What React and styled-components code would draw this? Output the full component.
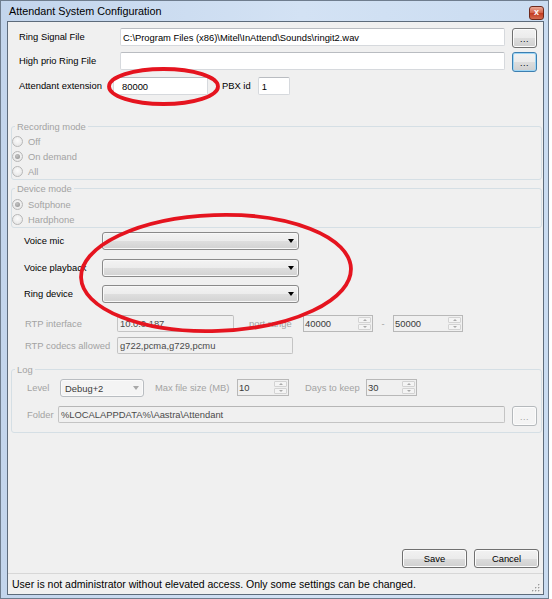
import React from 'react';
import styled, { createGlobalStyle } from 'styled-components';

const GlobalStyle = createGlobalStyle`
  html, body {
    margin: 0;
    padding: 0;
    background: #ffffff;
  }
  body {
    font-family: "Liberation Sans", Arial, sans-serif;
    font-size: 9.4px;
    color: #000;
  }
`;

const Desktop = styled.div`
  position: relative;
  width: 552px;
  height: 599px;
  display: flex;
  overflow: hidden;
`;

const Window = styled.div`
  box-sizing: border-box;
  width: 549px;
  height: 599px;
  border: 1px solid #6f7d8e;
  background: linear-gradient(to right, #c3d5ec, #d3e2f4 55%, #cadcf1);
  padding: 0 4px 3px 6px;
  display: flex;
  flex-direction: column;
`;

const TitleBar = styled.div`
  height: 20px;
  display: flex;
  align-items: center;
  justify-content: space-between;
  padding: 0 0 0 2px;
  font-size: 10.8px;
`;

const CloseButton = styled.div`
  box-sizing: border-box;
  width: 15px;
  height: 14px;
  margin-top: 3px;
  border: 1px solid #6e2a1d;
  border-radius: 3px;
  background: linear-gradient(#eaa895, #d5634b 48%, #c23a20 52%, #d46a4f);
  color: #fff;
  font: bold 9px "Liberation Sans", Arial, sans-serif;
  display: flex;
  align-items: center;
  justify-content: center;
  line-height: 1;
`;

const Client = styled.div`
  flex: 1;
  min-height: 0;
  border: 1px solid #5d6b7b;
  background: #f0f0f0;
  display: flex;
  flex-direction: column;
`;

const TopSection = styled.div`
  padding: 6px 0 0 11px;
  display: flex;
  flex-direction: column;
`;

const FileRow = styled.div`
  display: flex;
  align-items: flex-start;
  margin-top: ${p => p.$mt || 0}px;
`;

const Label = styled.span`
  flex: none;
  width: ${p => (p.$w ? `${p.$w}px` : 'auto')};
  margin-left: ${p => p.$ml || 0}px;
  height: ${p => p.$h || 18}px;
  line-height: ${p => p.$h || 18}px;
  color: ${p => (p.$off ? '#a3a3a3' : '#000')};
  text-align: ${p => p.$align || 'left'};
  white-space: nowrap;
`;

const TextBox = styled.div`
  box-sizing: border-box;
  flex: none;
  width: ${p => p.$w}px;
  height: ${p => p.$h || 18}px;
  margin-left: ${p => p.$ml || 0}px;
  border: 1px solid ${p => (p.$off ? '#c4c4c4' : '#d6d9dd')};
  border-top-color: ${p => (p.$off ? '#b6b6b6' : '#b9bcc1')};
  border-radius: 2px;
  background: ${p => (p.$off ? '#f0f0f0' : '#ffffff')};
  color: ${p => (p.$off ? '#4a4a4a' : '#000')};
  padding-left: ${p => p.$pl ?? 2}px;
  display: flex;
  align-items: center;
  white-space: nowrap;
  overflow: hidden;
`;

const DotsButton = styled.div`
  box-sizing: border-box;
  flex: none;
  width: 25px;
  height: 20px;
  margin-left: 7px;
  border: 1px solid ${p => (p.$focus ? '#3c7fb1' : p.$off ? '#b5b9bc' : '#707070')};
  border-radius: 3px;
  background: ${p =>
    p.$off ? '#f4f4f4' : 'linear-gradient(#f2f2f2, #ebebeb 50%, #dddddd 51%, #cfcfcf)'};
  box-shadow: ${p => (p.$focus ? 'inset 0 0 0 1px #9fd6f5' : 'inset 0 0 0 1px #fcfcfc')};
  color: ${p => (p.$off ? '#a0a0a0' : '#000')};
  display: flex;
  align-items: center;
  justify-content: center;
  font-size: 9px;
  letter-spacing: 0.5px;
  padding-top: 2px;
`;

const Group = styled.fieldset`
  margin: ${p => p.$mt || 0}px 1px 0 3px;
  padding: ${p => p.$pt || 0}px 0 ${p => p.$pb || 0}px ${p => p.$pl || 0}px;
  border: 1px solid #d5dfe5;
  border-radius: 3px;
  min-width: 0;
`;

const Legend = styled.legend`
  padding: 0 2px;
  margin-left: 3px;
  line-height: 11px;
  color: #a3a3a3;
`;

const RadioRow = styled.div`
  height: 15px;
  display: flex;
  align-items: center;
  gap: 5px;
  color: #a3a3a3;
`;

const RadioDot = styled.span`
  box-sizing: border-box;
  width: 11px;
  height: 11px;
  border-radius: 50%;
  border: 1px solid #b7b7b7;
  background: radial-gradient(circle at 50% 40%, #fbfbfb, #e2e2e2);
  display: flex;
  align-items: center;
  justify-content: center;

  &::after {
    content: '';
    display: ${p => (p.$on ? 'block' : 'none')};
    width: 5px;
    height: 5px;
    border-radius: 50%;
    background: radial-gradient(circle at 40% 35%, #c4c4c4, #8e8e8e);
  }
`;

const DeviceSection = styled.div`
  padding: 4px 0 0 16px;
  display: flex;
  flex-direction: column;
  gap: 8.5px;
`;

const Row = styled.div`
  display: flex;
  align-items: flex-start;
  margin-top: ${p => p.$mt || 0}px;
`;

const Combo = styled.div`
  box-sizing: border-box;
  flex: none;
  width: ${p => p.$w}px;
  height: 18px;
  border: 1px solid ${p => (p.$off ? '#b9bdc1' : '#8a8a8a')};
  border-radius: 3px;
  background: ${p =>
    p.$off ? '#f4f4f4' : 'linear-gradient(#f3f3f3, #ececec 50%, #dedede 51%, #d2d2d2)'};
  box-shadow: inset 0 0 0 1px ${p => (p.$off ? '#fafafa' : '#f8f8f8')};
  display: flex;
  align-items: center;
  justify-content: space-between;
  padding: 0 4px 0 4px;
  color: ${p => (p.$off ? '#3c3c3c' : '#000')};
`;

const ComboArrow = styled.span`
  width: 0;
  height: 0;
  border-left: 3.5px solid transparent;
  border-right: 3.5px solid transparent;
  border-top: 4px solid ${p => (p.$off ? '#a8a8a8' : '#000')};
`;

const RtpSection = styled.div`
  padding: 12px 0 0 17px;
  display: flex;
  flex-direction: column;
  gap: 5px;
`;

const Spin = styled.div`
  box-sizing: border-box;
  flex: none;
  width: ${p => p.$w}px;
  height: ${p => p.$h || 17}px;
  margin-left: ${p => p.$ml || 0}px;
  border: 1px solid #b8b8b8;
  background: #f0f0f0;
  display: flex;
  color: #3a3a3a;
`;

const SpinValue = styled.span`
  flex: 1;
  display: flex;
  align-items: center;
  padding-left: 1px;
`;

const SpinButtons = styled.span`
  width: 13px;
  margin: 1px 1px 1px 0;
  display: flex;
  flex-direction: column;
  gap: 1px;
`;

const SpinHalf = styled.span`
  flex: 1;
  border: 1px solid #d3d3d3;
  border-radius: 1px;
  background: #f4f4f4;
  display: flex;
  align-items: center;
  justify-content: center;

  &::after {
    content: '';
    width: 0;
    height: 0;
    border-left: 2.5px solid transparent;
    border-right: 2.5px solid transparent;
    ${p => (p.$down ? 'border-top' : 'border-bottom')}: 2.5px solid #a9a9a9;
  }
`;

const LogRows = styled.div`
  padding-left: 15px;
  display: flex;
  flex-direction: column;
`;

const ButtonBar = styled.div`
  margin-top: auto;
  display: flex;
  justify-content: flex-end;
  gap: 7px;
  padding: 0 4px 5px 0;
`;

const PushButton = styled.div`
  box-sizing: border-box;
  width: 65px;
  height: 19px;
  border: 1px solid #707070;
  border-radius: 3px;
  background: linear-gradient(#f2f2f2, #ebebeb 50%, #dddddd 51%, #cfcfcf);
  box-shadow: inset 0 0 0 1px #fcfcfc;
  display: flex;
  align-items: center;
  justify-content: center;
`;

const StatusBar = styled.div`
  height: 20px;
  border-top: 1px solid #d7d7d7;
  display: flex;
  align-items: center;
  justify-content: space-between;
  padding: 0 3px 0 4px;
  font-size: 10.5px;
`;

const Grip = styled.svg`
  align-self: flex-end;
  margin-bottom: 2px;
`;

const Marks = styled.svg`
  position: absolute;
  left: 0;
  top: 0;
  pointer-events: none;
`;

function Radio({ on, children }) {
  return (
    <RadioRow>
      <RadioDot $on={on} />
      {children}
    </RadioRow>
  );
}

function SpinBox({ value, w, ml }) {
  return (
    <Spin $w={w} $ml={ml}>
      <SpinValue>{value}</SpinValue>
      <SpinButtons>
        <SpinHalf />
        <SpinHalf $down />
      </SpinButtons>
    </Spin>
  );
}

function DropDown({ w, off, children }) {
  return (
    <Combo $w={w} $off={off}>
      <span>{children}</span>
      <ComboArrow $off={off} />
    </Combo>
  );
}

export default function App() {
  return (
    <Desktop>
      <GlobalStyle />
      <Window>
        <TitleBar>
          <span>Attendant System Configuration</span>
          <CloseButton>x</CloseButton>
        </TitleBar>
        <Client>
          <TopSection>
            <FileRow>
              <Label $w={101}>Ring Signal File</Label>
              <TextBox $w={385}>C:\Program Files (x86)\Mitel\InAttend\Sounds\ringit2.wav</TextBox>
              <DotsButton>...</DotsButton>
            </FileRow>
            <FileRow $mt={4}>
              <Label $w={101}>High prio Ring File</Label>
              <TextBox $w={385} />
              <DotsButton $focus>...</DotsButton>
            </FileRow>
            <FileRow $mt={5}>
              <Label $w={94}>Attendant extension</Label>
              <TextBox $w={95} $pl={8}>80000</TextBox>
              <Label $ml={14}>PBX id</Label>
              <TextBox $w={32} $ml={7} $pl={3}>1</TextBox>
            </FileRow>
          </TopSection>

          <Group $mt={26} $pt={2}>
            <Legend>Recording mode</Legend>
            <Radio>Off</Radio>
            <Radio on>On demand</Radio>
            <Radio>All</Radio>
          </Group>

          <Group $mt={3} $pt={3}>
            <Legend>Device mode</Legend>
            <Radio on>Softphone</Radio>
            <Radio>Hardphone</Radio>
          </Group>

          <DeviceSection>
            <Row>
              <Label $w={78}>Voice mic</Label>
              <DropDown w={197} />
            </Row>
            <Row>
              <Label $w={78}>Voice playback</Label>
              <DropDown w={197} />
            </Row>
            <Row>
              <Label $w={78}>Ring device</Label>
              <DropDown w={197} />
            </Row>
          </DeviceSection>

          <RtpSection>
            <Row>
              <Label $w={92} $h={17} $off>RTP interface</Label>
              <TextBox $w={117} $h={17} $off>10.0.0.187</TextBox>
              <Label $w={54} $ml={15} $h={17} $off>port range</Label>
              <SpinBox value="40000" w={70} />
              <Label $w={20} $h={17} $align="center" $off>-</Label>
              <SpinBox value="50000" w={70} />
            </Row>
            <Row>
              <Label $w={92} $h={17} $off>RTP codecs allowed</Label>
              <TextBox $w={176} $h={17} $off>g722,pcma,g729,pcmu</TextBox>
            </Row>
          </RtpSection>

          <Group $mt={10} $pt={4} $pb={6}>
            <Legend>Log</Legend>
            <LogRows>
              <Row>
                <Label $w={33} $off>Level</Label>
                <DropDown w={84} off>Debug+2</DropDown>
                <Label $w={82} $ml={11} $off>Max file size (MB)</Label>
                <SpinBox value="10" w={52} />
                <Label $w={61} $ml={16} $off>Days to keep</Label>
                <SpinBox value="30" w={51} />
              </Row>
              <Row $mt={9}>
                <Label $w={31} $h={17} $off>Folder</Label>
                <TextBox $w={447} $h={17} $off>%LOCALAPPDATA%\Aastra\Attendant</TextBox>
                <DotsButton $off>...</DotsButton>
              </Row>
            </LogRows>
          </Group>

          <ButtonBar>
            <PushButton>Save</PushButton>
            <PushButton>Cancel</PushButton>
          </ButtonBar>

          <StatusBar>
            <span>User is not administrator without elevated access. Only some settings can be changed.</span>
            <Grip width="9" height="9" viewBox="0 0 9 9">
              {[[7, 1], [4, 4], [7, 4], [1, 7], [4, 7], [7, 7]].map(([x, y]) => (
                <g key={`${x}-${y}`}>
                  <rect x={x + 0.6} y={y + 0.6} width="1.4" height="1.4" fill="#ffffff" />
                  <rect x={x} y={y} width="1.4" height="1.4" fill="#9a9a9a" />
                </g>
              ))}
            </Grip>
          </StatusBar>
        </Client>
      </Window>

      <Marks width="552" height="599" viewBox="0 0 552 599">
        <ellipse cx="163.5" cy="86.5" rx="54.5" ry="17.5" fill="none" stroke="#e5141f" strokeWidth="3.8" />
        <ellipse
          cx="216"
          cy="273"
          rx="135"
          ry="58"
          transform="rotate(-2 216 273)"
          fill="none"
          stroke="#e5141f"
          strokeWidth="3.8"
        />
      </Marks>
    </Desktop>
  );
}
